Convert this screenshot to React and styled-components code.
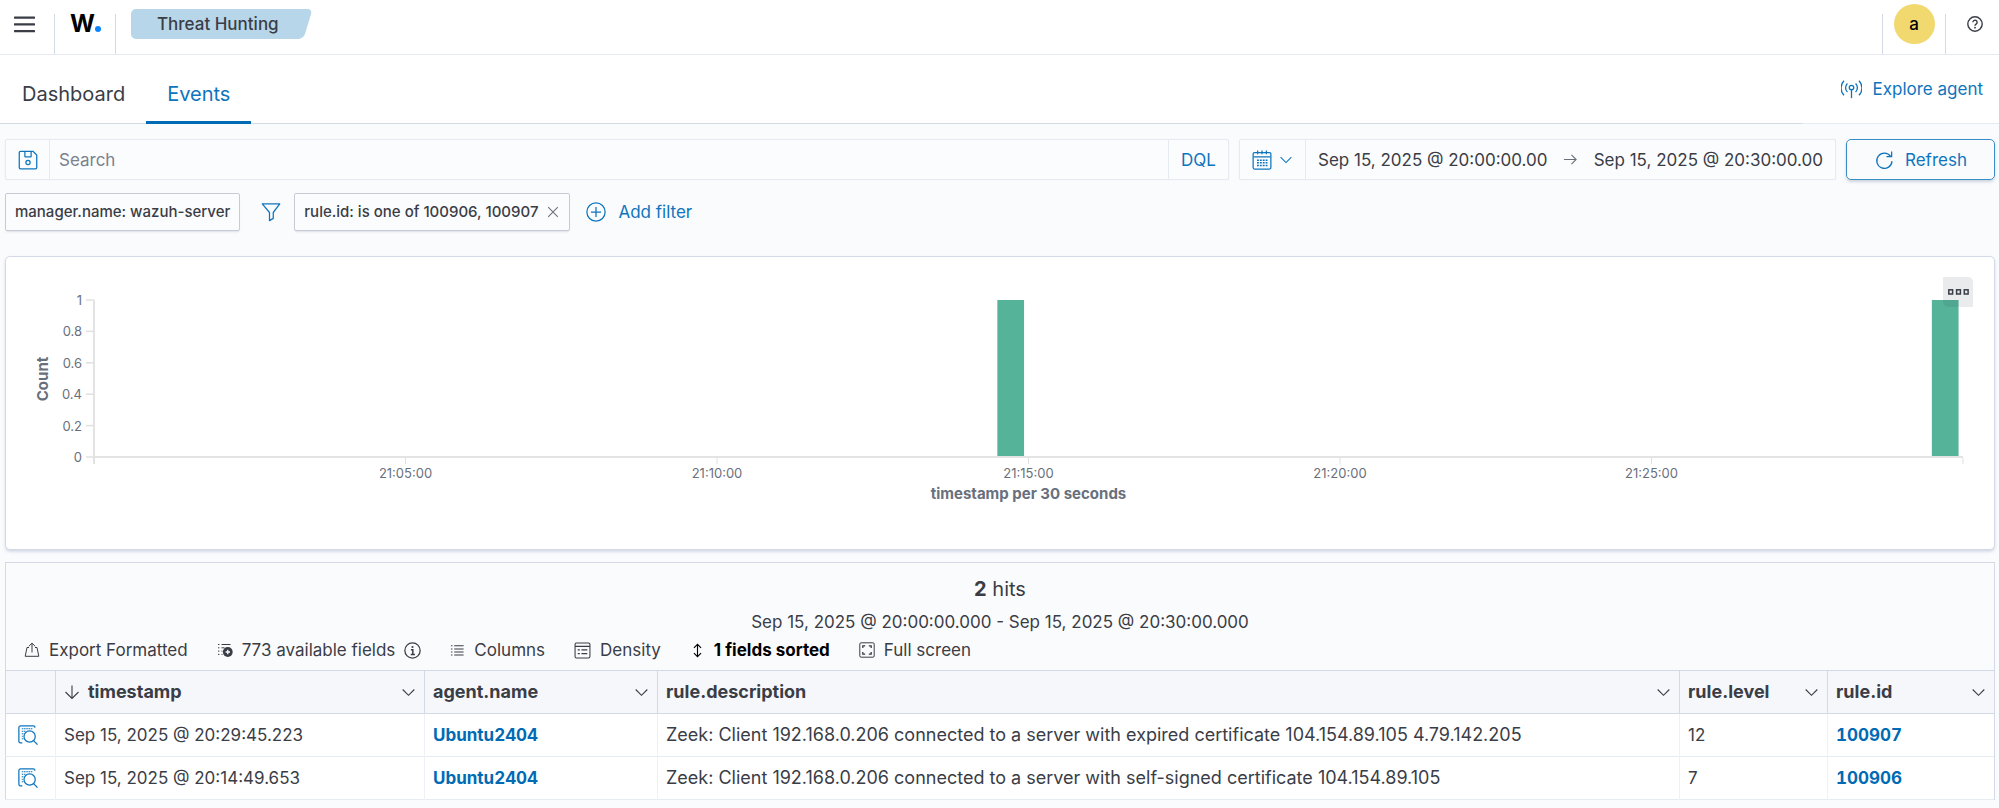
import React from "react";
import styled, { createGlobalStyle } from "styled-components";

const color = {
  text: "#3a3d46",
  subdued: "#69707d",
  link: "#0e75bd",
  linkStrong: "#006bb4",
  page: "#fafbfd",
  white: "#ffffff",
  border: "#d3dae6",
  borderLight: "#e6eaf1",
  header: "#f5f7fa",
  bar: "#54b399",
};

const GlobalStyle = createGlobalStyle`
  *, *::before, *::after { box-sizing: border-box; }
  body {
    margin: 0;
    background: ${color.page};
    color: ${color.text};
    font-family: Inter, "Liberation Sans", sans-serif;
    font-size: 17px;
    line-height: 24px;
  }
  button, input {
    margin: 0;
    padding: 0;
    border: 0;
    background: none;
    font: inherit;
    color: inherit;
    cursor: pointer;
  }
  svg { display: block; flex: none; }
`;

/* ---------- icons ---------- */

const Icon = ({ size = 20, children, label }) => (
  <svg
    width={size}
    height={size}
    viewBox="0 0 16 16"
    fill="none"
    stroke="currentColor"
    strokeWidth="1"
    role={label ? "img" : undefined}
    aria-label={label}
    aria-hidden={label ? undefined : true}
  >
    {children}
  </svg>
);

const MenuIcon = () => (
  <svg width="21" height="17" viewBox="0 0 21 17" fill="currentColor" aria-hidden="true">
    <rect y="0.5" width="21" height="2.3" rx="0.5" />
    <rect y="7.3" width="21" height="2.3" rx="0.5" />
    <rect y="14" width="21" height="2.3" rx="0.5" />
  </svg>
);

const HelpIcon = () => (
  <Icon size={16}>
    <circle cx="8" cy="8" r="7.2" strokeWidth="1.4" />
    <path d="M5.9 6.3a2.1 2.1 0 1 1 3.2 1.8c-.8.5-1.1.8-1.1 1.6" strokeWidth="1.4" />
    <circle cx="8" cy="11.7" r="0.9" fill="currentColor" stroke="none" />
  </Icon>
);

const AgentIcon = () => (
  <Icon size={21}>
    <circle cx="8" cy="6.5" r="1.7" />
    <path d="M8 8.2V14.6" />
    <path d="M4.9 3.4a4.6 4.6 0 0 0 0 6.6M11.1 3.4a4.6 4.6 0 0 1 0 6.6" />
    <path d="M2.3 1.4a7.8 7.8 0 0 0 0 11M13.7 1.4a7.8 7.8 0 0 1 0 11" />
  </Icon>
);

const SaveIcon = () => (
  <Icon>
    <path d="M2 1H12L15 4V14a1 1 0 0 1-1 1H2a1 1 0 0 1-1-1V2a1 1 0 0 1 1-1Z" />
    <path d="M5.5 1V4.900a.5.5 0 0 0 .5.5h4a.5.5 0 0 0 .5-.5V1" />
    <circle cx="8" cy="10" r="1.7" />
  </Icon>
);

const CalendarIcon = () => (
  <Icon>
    <rect x="0.9" y="2" width="14.2" height="13.2" rx="1.2" />
    <path d="M1.2 5.5h13.6M4.5.4v3M8 .4v3M11.5.4v3" />
    <path d="M4 8.1h8.400M4 10.2h8.400M4 12.3h8.400" strokeWidth="1.2" strokeDasharray="1.5 0.8" />
  </Icon>
);

const ChevronIcon = ({ size = 15 }) => (
  <Icon size={size}>
    <path d="M1.8 4.8 8 11l6.200-6.200" strokeWidth="1.200" />
  </Icon>
);

const ArrowRightIcon = () => (
  <Icon size={15}>
    <path d="M1 8h13M9 3l5 5-5 5" strokeWidth="1.2" />
  </Icon>
);

const RefreshIcon = () => (
  <Icon>
    <path d="M13.3 5.100A6.100 6.100 0 1 0 14.400 8.900" />
    <path d="M14.100 1.200V5.200H10" />
  </Icon>
);

const FilterIcon = () => (
  <Icon>
    <path d="M1 1.500h14L9.800 8.400v4.700l-3 1.800V8.400L1 1.500Z" strokeLinejoin="round" />
  </Icon>
);

const CrossIcon = () => (
  <Icon size={14}>
    <path d="M2.500 2.500l11 11M13.500 2.500l-11 11" strokeWidth="1.2" />
  </Icon>
);

const PlusCircleIcon = () => (
  <Icon>
    <circle cx="8" cy="8" r="7.300" />
    <path d="M8 4v8M4 8h8" />
  </Icon>
);

const BoxesIcon = () => (
  <svg width="21" height="6" viewBox="0 0 21 6" fill="none" stroke="currentColor" strokeWidth="1.500" aria-hidden="true">
    <rect x="0.800" y="0.800" width="3.800" height="4.200" />
    <rect x="8.600" y="0.800" width="3.800" height="4.200" />
    <rect x="16.300" y="0.800" width="3.800" height="4.200" />
  </svg>
);

const ExportIcon = () => (
  <Icon size={16}>
    <path d="M5 5.500H3L1.200 14.300H14.800L13 5.500H11" />
    <path d="M8 10.500V1.300M4.800 4.300 8 1.200l3.200 3.100" />
  </Icon>
);

const ListAddIcon = () => (
  <Icon size={16}>
    <path d="M1 2.500h1.400M4.500 2.500h9M1 5.800h1.400M4.500 5.800h3M1 9.100h1.400M4.500 9.100h1M1 12.400h1.400M4.500 12.400h1" />
    <circle cx="10.800" cy="10" r="4.900" fill="currentColor" stroke="none" />
    <path d="M10.800 7.800v4.400M8.600 10h4.400" stroke={color.page} strokeWidth="1.300" />
  </Icon>
);

const InfoIcon = () => (
  <Icon size={17}>
    <circle cx="8" cy="8" r="7.200" strokeWidth="1.200" />
    <circle cx="8" cy="4.700" r="1" fill="currentColor" stroke="none" />
    <path d="M6.500 7.200H8.300v4.600M6.300 11.800h4" strokeWidth="1.400" />
  </Icon>
);

const ListIcon = () => (
  <Icon size={15}>
    <path d="M1 3h1.600M4.500 3H14.500M1 6.300h1.600M4.500 6.300H14.500M1 9.600h1.600M4.500 9.600H14.500M1 12.900h1.600M4.500 12.900H14.500" strokeWidth="1.100" />
  </Icon>
);

const DensityIcon = () => (
  <Icon size={17}>
    <rect x="1" y="1" width="14" height="14" rx="1.300" />
    <path d="M1 4.200h14M3.500 7.500h2M7 7.500h5.500M3.500 11h2M7 11h5.500" strokeWidth="1.200" />
  </Icon>
);

const SortIcon = () => (
  <Icon size={15}>
    <path d="M8 2v12M4.200 5.200 8 1.500l3.800 3.700M4.200 10.800 8 14.500l3.800-3.700" strokeWidth="1.200" />
  </Icon>
);

const FullScreenIcon = () => (
  <Icon size={16}>
    <rect x="0.800" y="0.800" width="14.400" height="14.400" rx="1.300" />
    <path d="M3.800 6V3.800H6.200M9.800 3.800h2.400V6M12.200 10v2.200H9.800M6.200 12.200H3.800V10" strokeWidth="1.300" />
  </Icon>
);

const SortDownIcon = () => (
  <Icon size={16}>
    <path d="M8 1.500v12.800M1.500 8 8 14.400 14.500 8" strokeWidth="1.100" />
  </Icon>
);

const InspectIcon = () => (
  <Icon>
    <path d="M3.500 14.300H2A1.300 1.300 0 0 1 .700 13V2A1.300 1.300 0 0 1 2 .700H12.300A1.300 1.300 0 0 1 13.500 2.200" />
    <path d="M3 3h9M3 5h3M3 7h1.300M3 9h.900M3 11h1.300" strokeWidth="0.900" strokeDasharray="1.300 0.500" />
    <circle cx="9.300" cy="9.200" r="4.500" />
    <path d="M12.500 12.500 15.600 15.700" />
  </Icon>
);

/* ---------- top header ---------- */

const TopBar = styled.header`
  display: flex;
  height: 55px;
  background: ${color.white};
  border-bottom: 1px solid ${color.borderLight};
`;

const TopSection = styled.div`
  display: flex;
  align-items: center;
  width: ${(p) => p.$width};
  padding: 0 0 6px ${(p) => p.$indent || "0"};
`;

const Divider = styled.span`
  width: 1px;
  margin-top: 14px;
  background: ${color.border};
`;

const Logo = styled.a`
  display: flex;
  align-items: baseline;
  color: #000;
  font-size: 24px;
  font-weight: 700;
  text-decoration: none;
`;

const LogoDot = styled.span`
  width: 6px;
  height: 6px;
  border-radius: 50%;
  background: #0a84ff;
`;

const Crumb = styled.span`
  position: relative;
  z-index: 0;
  height: 30px;
  margin: 9px auto 0 15px;
  padding: 0 34px 0 26px;
  font-weight: 500;
  line-height: 30px;

  &::before,
  &::after {
    content: "";
    position: absolute;
    z-index: -1;
    inset: 0 5px 0 0;
    border-radius: 5px;
    background: #b8d6e9;
    transform: skewX(-17deg);
  }

  &::before {
    inset: 0 20px 0 0;
    transform: none;
  }

  &::after {
    left: 20px;
  }
`;

const Avatar = styled.button`
  width: 41px;
  height: 40px;
  margin: 0 auto;
  border-radius: 50%;
  background: #f1d86f;
  color: #000;
  font-weight: 500;
`;

/* ---------- tabs ---------- */

const TabBar = styled.div`
  display: flex;
  height: 69px;
  background: ${color.white};
`;

const TabList = styled.nav`
  display: flex;
  flex: 1;
  padding-left: 1px;
  border-bottom: 1px solid ${color.border};
`;

const Tab = styled.button`
  height: 69px;
  padding: 12px 21px 0;
  border-bottom: 3px solid ${(p) => (p.$active ? color.linkStrong : "transparent")};
  color: ${(p) => (p.$active ? color.link : color.text)};
  font-size: 20px;
`;

const TabActions = styled.div`
  display: flex;
  align-items: center;
  justify-content: flex-end;
  width: 197px;
  padding-right: 16px;
  border-bottom: 1px solid ${color.borderLight};
`;

const LinkButton = styled.button`
  display: flex;
  align-items: center;
  gap: 10px;
  color: ${color.link};
`;

/* ---------- query bar ---------- */

const Content = styled.main`
  padding: 15px 4px 9px 5px;
`;

const QueryBar = styled.div`
  display: flex;
  gap: 10px;
  height: 41px;
`;

const Field = styled.div`
  display: flex;
  flex: ${(p) => (p.$width ? "none" : "1")};
  width: ${(p) => p.$width || "auto"};
  border: 1px solid ${color.borderLight};
  border-radius: 2px;
  background: #fbfcfd;
  box-shadow: 0 0 1px ${color.borderLight};
`;

const FieldButton = styled.button`
  display: flex;
  align-items: center;
  justify-content: center;
  gap: 7px;
  width: ${(p) => p.$width};
  color: ${color.link};
  border-left: ${(p) => (p.$end ? `1px solid ${color.borderLight}` : "0")};
  border-right: ${(p) => (p.$end ? "0" : `1px solid ${color.borderLight}`)};
`;

const SearchInput = styled.input`
  flex: 1;
  min-width: 0;
  padding: 0 9px;
  cursor: text;
  outline: none;

  &::placeholder {
    color: #7b818d;
    opacity: 1;
  }
`;

const DateRange = styled.div`
  display: flex;
  flex: 1;
  align-items: center;
  justify-content: space-between;
  padding: 0 12px;
  color: ${color.text};
`;

const RangeArrow = styled.span`
  color: ${color.subdued};
`;

const RefreshButton = styled.button`
  display: flex;
  align-items: center;
  justify-content: center;
  gap: 11px;
  width: 149px;
  border: 1px solid #3a8cc5;
  border-radius: 5px;
  color: ${color.link};
  box-shadow: 0 2px 3px rgba(100, 130, 160, 0.3);
`;

/* ---------- filters ---------- */

const FilterBar = styled.div`
  display: flex;
  align-items: center;
  height: 39px;
  margin-top: 12px;
`;

const FilterPill = styled.span`
  display: flex;
  align-items: center;
  gap: 8px;
  height: 38px;
  padding: 0 9px;
  border: 1px solid #c6cbd6;
  border-radius: 2px;
  background: #fbfcfd;
  box-shadow: 0 2px 2px -1px rgba(152, 162, 179, 0.3);
  font-size: 15px;
  font-weight: 500;
`;

const PillRemove = styled.button`
  color: ${color.subdued};
`;

const FilterToggle = styled.button`
  margin: 0 13px 0 21px;
  color: ${color.link};
`;

const AddFilter = styled(LinkButton)`
  gap: 12px;
  margin-left: 16px;
`;

/* ---------- histogram ---------- */

const ChartPanel = styled.section`
  position: relative;
  display: grid;
  grid-template-columns: 88px 1fr 31px;
  height: 294px;
  margin-top: 25px;
  border: 1px solid ${color.border};
  border-radius: 5px;
  background: ${color.white};
  box-shadow: 0 2px 3px rgba(130, 150, 180, 0.3);
`;

const AxisSvg = styled.svg`
  width: 100%;
  height: 260px;
  overflow: visible;
  fill: ${color.subdued};
  font-size: 13px;
`;

const AxisTitle = styled.text`
  font-size: 15px;
  font-weight: 700;
`;

const ChartMenu = styled.button`
  position: absolute;
  top: 20px;
  right: 21px;
  display: grid;
  place-items: center;
  width: 30px;
  height: 30px;
  border-radius: 0 5px 0 5px;
  background: rgba(52, 55, 65, 0.1);
`;

const plotTop = 43;
const plotBottom = 200;
const yTicks = [0, 0.2, 0.4, 0.6, 0.8, 1];
const xTicks = ["", "21:05:00", "21:10:00", "21:15:00", "21:20:00", "21:25:00", ""];
const buckets = [
  { index: 29, count: 1 },
  { index: 59, count: 1 },
];
const yOf = (v) => plotBottom - v * (plotBottom - plotTop);

const Histogram = () => (
  <ChartPanel aria-label="Events over time">
    <AxisSvg>
      <AxisTitle textAnchor="middle" transform="translate(42 122) rotate(-90)">
        Count
      </AxisTitle>
      {yTicks.map((v) => (
        <g key={v}>
          <text x="76" y={yOf(v) + 5} textAnchor="end">
            {v}
          </text>
          <line x1="80" x2="88" y1={yOf(v)} y2={yOf(v)} stroke="#e0e0e0" strokeWidth="1.5" />
        </g>
      ))}
    </AxisSvg>
    <AxisSvg>
      {buckets.map((b) => (
        <rect
          key={b.index}
          x={`${(b.index / 60) * 100}%`}
          y={yOf(b.count)}
          width={`${100 / 70}%`}
          height={plotBottom - yOf(b.count)}
          fill={color.bar}
        />
      ))}
      <line x1="0" x2="0" y1={plotTop} y2="207" stroke="#e3e3e3" strokeWidth="2" />
      <line x1="0" x2="100%" y1={plotBottom} y2={plotBottom} stroke="#e3e3e3" strokeWidth="2" />
      {xTicks.map((label, i) => (
        <g key={i}>
          <line x1={`${(i / 6) * 100}%`} x2={`${(i / 6) * 100}%`} y1="201" y2="207" stroke="#e0e0e0" />
          <text x={`${(i / 6) * 100}%`} y="221" textAnchor="middle">
            {label}
          </text>
        </g>
      ))}
      <AxisTitle x="50%" y="242" textAnchor="middle">
        timestamp per 30 seconds
      </AxisTitle>
    </AxisSvg>
    <ChartMenu aria-label="Panel options">
      <BoxesIcon />
    </ChartMenu>
  </ChartPanel>
);

/* ---------- results ---------- */

const ResultsHead = styled.section`
  margin-top: 12px;
  padding: 14px 0 8px;
  border: 1px solid ${color.border};
  border-bottom: 0;
  text-align: center;
`;

const Hits = styled.p`
  margin: 0;
  font-size: 20px;
`;

const HitRange = styled.p`
  margin: 9px 0 4px;
`;

const Toolbar = styled.div`
  display: flex;
  gap: 29px;
  padding-left: 18px;
`;

const ToolButton = styled.button`
  display: flex;
  align-items: center;
  gap: 9px;
  color: ${(p) => (p.$active ? "#000" : color.text)};
  font-weight: ${(p) => (p.$active ? 700 : 400)};
`;

const Grid = styled.table`
  width: 100%;
  table-layout: fixed;
  border-collapse: collapse;
  border: 1px solid ${color.border};
  background: ${color.white};
  text-align: left;
`;

const Col = styled.col`
  width: ${(p) => p.$width};
`;

const HeadRow = styled.tr`
  height: 43px;
  background: ${color.header};
`;

const HeadCell = styled.th`
  padding: 0 8px;
  border: 1px solid ${color.border};
  font-size: 18px;
  font-weight: 700;
`;

const HeadButton = styled.button`
  display: flex;
  align-items: center;
  gap: 8px;
  width: 100%;
`;

const HeadLabel = styled.span`
  flex: 1;
  text-align: left;
`;

const BodyRow = styled.tr`
  height: 43px;
  border-bottom: 1px solid ${color.borderLight};
`;

const Cell = styled.td`
  padding: 0 8px;
  border-right: 1px solid #eef1f6;
  font-size: ${(p) => (p.$prose ? "18px" : "17px")};
  white-space: nowrap;
  overflow: hidden;

  &:last-child {
    border-right-color: ${color.border};
  }
`;

const InspectButton = styled.button`
  display: block;
  margin-left: 4px;
  color: ${color.link};
`;

const CellLink = styled.a`
  color: ${color.linkStrong};
  font-weight: 700;
  font-variant-numeric: tabular-nums;
  text-decoration: none;
`;

const columns = [
  { name: "timestamp", width: "369px", sorted: true },
  { name: "agent.name", width: "233px" },
  { name: "rule.description", width: "auto" },
  { name: "rule.level", width: "148px" },
  { name: "rule.id", width: "167px" },
];

const events = [
  {
    time: "Sep 15, 2025 @ 20:29:45.223",
    agent: "Ubuntu2404",
    description:
      "Zeek: Client 192.168.0.206 connected to a server with expired certificate 104.154.89.105 4.79.142.205",
    level: 12,
    id: "100907",
  },
  {
    time: "Sep 15, 2025 @ 20:14:49.653",
    agent: "Ubuntu2404",
    description: "Zeek: Client 192.168.0.206 connected to a server with self-signed certificate 104.154.89.105",
    level: 7,
    id: "100906",
  },
];

const EventsGrid = () => (
  <Grid>
    <colgroup>
      <Col $width="50px" />
      {columns.map((c) => (
        <Col key={c.name} $width={c.width} />
      ))}
    </colgroup>
    <thead>
      <HeadRow>
        <HeadCell as="td" />
        {columns.map((c) => (
          <HeadCell key={c.name} scope="col">
            <HeadButton>
              {c.sorted && <SortDownIcon />}
              <HeadLabel>{c.name}</HeadLabel>
              <ChevronIcon />
            </HeadButton>
          </HeadCell>
        ))}
      </HeadRow>
    </thead>
    <tbody>
      {events.map((e) => (
        <BodyRow key={e.id}>
          <Cell>
            <InspectButton aria-label="Inspect document details">
              <InspectIcon />
            </InspectButton>
          </Cell>
          <Cell>{e.time}</Cell>
          <Cell>
            <CellLink href="#agent">{e.agent}</CellLink>
          </Cell>
          <Cell $prose>{e.description}</Cell>
          <Cell>{e.level}</Cell>
          <Cell>
            <CellLink href="#rule">{e.id}</CellLink>
          </Cell>
        </BodyRow>
      ))}
    </tbody>
  </Grid>
);

export default function App() {
  return (
    <>
      <GlobalStyle />
      <TopBar>
        <TopSection $width="54px" $indent="14px">
          <button aria-label="Toggle navigation">
            <MenuIcon />
          </button>
        </TopSection>
        <Divider />
        <TopSection $width="60px" $indent="15px">
          <Logo href="#home">
            W<LogoDot />
          </Logo>
        </TopSection>
        <Divider />
        <Crumb>Threat Hunting</Crumb>
        <Divider />
        <TopSection $width="62px">
          <Avatar aria-label="Account">a</Avatar>
        </TopSection>
        <Divider />
        <TopSection $width="53px" $indent="21px">
          <button aria-label="Help">
            <HelpIcon />
          </button>
        </TopSection>
      </TopBar>

      <TabBar>
        <TabList aria-label="Views">
          <Tab>Dashboard</Tab>
          <Tab $active aria-current="page">
            Events
          </Tab>
        </TabList>
        <TabActions>
          <LinkButton>
            <AgentIcon />
            Explore agent
          </LinkButton>
        </TabActions>
      </TabBar>

      <Content>
        <QueryBar>
          <Field>
            <FieldButton $width="44px" aria-label="Saved queries">
              <SaveIcon />
            </FieldButton>
            <SearchInput placeholder="Search" aria-label="Search" />
            <FieldButton $width="60px" $end>
              DQL
            </FieldButton>
          </Field>
          <Field $width="597px">
            <FieldButton $width="66px" aria-label="Quick date selection">
              <CalendarIcon />
              <ChevronIcon size={14} />
            </FieldButton>
            <DateRange>
              <button>Sep 15, 2025 @ 20:00:00.00</button>
              <RangeArrow>
                <ArrowRightIcon />
              </RangeArrow>
              <button>Sep 15, 2025 @ 20:30:00.00</button>
            </DateRange>
          </Field>
          <RefreshButton>
            <RefreshIcon />
            Refresh
          </RefreshButton>
        </QueryBar>

        <FilterBar>
          <FilterPill>manager.name: wazuh-server</FilterPill>
          <FilterToggle aria-label="Filter options">
            <FilterIcon />
          </FilterToggle>
          <FilterPill>
            rule.id: is one of 100906, 100907
            <PillRemove aria-label="Remove filter">
              <CrossIcon />
            </PillRemove>
          </FilterPill>
          <AddFilter>
            <PlusCircleIcon />
            Add filter
          </AddFilter>
        </FilterBar>

        <Histogram />

        <ResultsHead>
          <Hits>
            <strong>2</strong> hits
          </Hits>
          <HitRange>Sep 15, 2025 @ 20:00:00.000 - Sep 15, 2025 @ 20:30:00.000</HitRange>
          <Toolbar>
            <ToolButton>
              <ExportIcon />
              Export Formatted
            </ToolButton>
            <ToolButton>
              <ListAddIcon />
              773 available fields
              <InfoIcon />
            </ToolButton>
            <ToolButton>
              <ListIcon />
              Columns
            </ToolButton>
            <ToolButton>
              <DensityIcon />
              Density
            </ToolButton>
            <ToolButton $active>
              <SortIcon />
              1 fields sorted
            </ToolButton>
            <ToolButton>
              <FullScreenIcon />
              Full screen
            </ToolButton>
          </Toolbar>
        </ResultsHead>
        <EventsGrid />
      </Content>
    </>
  );
}
